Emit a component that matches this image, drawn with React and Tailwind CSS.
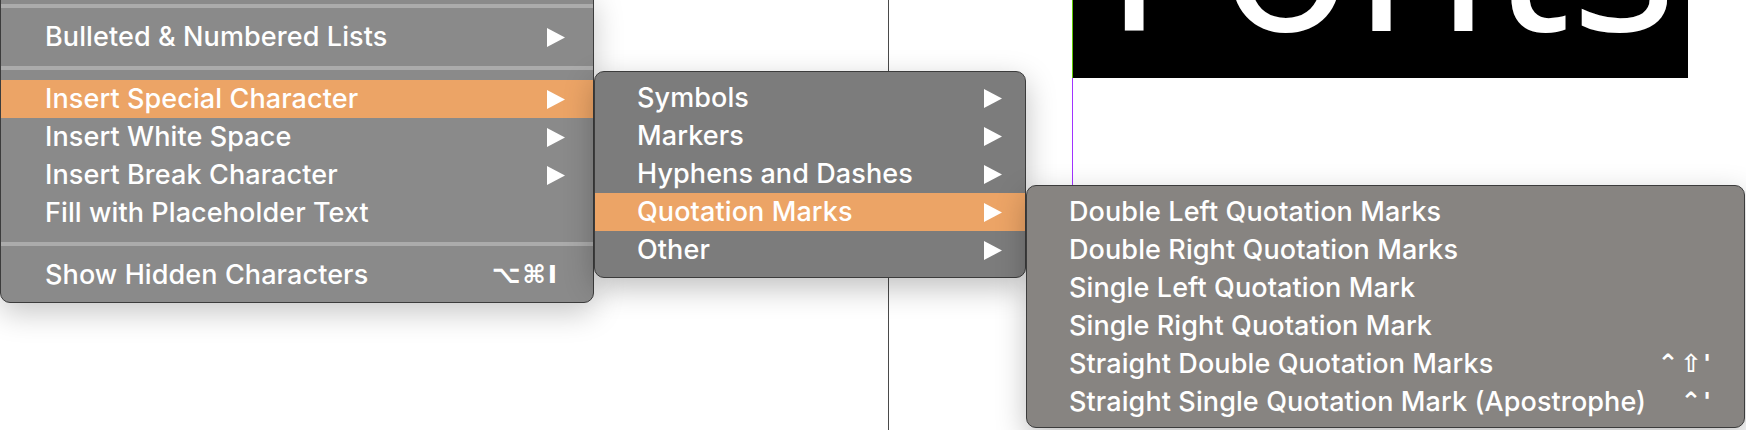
import React from 'react';

const Arrow = () => (
    <svg width="18" height="19" viewBox="0 0 18 19" className="shrink-0">
        <polygon points="0,0 18,9.5 0,19" fill="#ffffff" />
    </svg>
);

const Separator = () => (
    <div className="h-[24px] pt-[10px]">
        <div className="h-[4px] bg-[#ababab]" />
    </div>
);

const Row = ({ label, active, arrow, shortcut, pl, pr }) => (
    <div className={`flex h-[38px] items-center justify-between ${pl} ${pr} ${active ? 'bg-[#eca466]' : ''}`}>
        <span className="whitespace-nowrap">{label}</span>
        {arrow && <Arrow />}
        {shortcut && <span className="whitespace-nowrap font-['DejaVu_Sans',sans-serif] text-[25px] font-bold tracking-[2px]">{shortcut}</span>}
    </div>
);

const subItems = ["Symbols", "Markers", "Hyphens and Dashes", "Quotation Marks", "Other"];

const quoteItems = [
    { label: "Double Left Quotation Marks" },
    { label: "Double Right Quotation Marks" },
    { label: "Single Left Quotation Mark" },
    { label: "Single Right Quotation Mark" },
    { label: "Straight Double Quotation Marks", shortcut: "⌃⇧'" },
    { label: "Straight Single Quotation Mark (Apostrophe)", shortcut: "⌃'" },
];

export default function App() {
    return (
        <div className="relative h-[430px] w-[1746px] overflow-hidden bg-white font-['Inter','DejaVu_Sans',sans-serif] text-[27px] font-medium tracking-[0.1px] text-white">
            {/* canvas behind the menus */}
            <div className="absolute left-[888px] top-0 h-full w-px bg-[#4a4a4a]" />
            <div className="absolute left-[1072px] top-0 h-[78px] w-[616px] overflow-hidden bg-black">
                <div className="absolute left-[31px] top-[-167px] whitespace-nowrap font-['Open_Sans',sans-serif] text-[224px] font-normal leading-none tracking-normal text-white">Fonts</div>
            </div>
            <div className="absolute left-[1072px] top-0 h-[78px] w-px bg-[#5fcc00]" />
            <div className="absolute left-[1072px] top-[78px] h-[110px] w-px bg-[#a033ff]" />

            {/* main menu */}
            <div className="absolute left-0 top-[-7px] w-[594px] rounded-b-[10px] border border-[#3c3c3c] bg-[#8a8a8a] pb-[8px] shadow-[0_10px_30px_rgba(0,0,0,0.22)]">
                <Separator />
                <Row label="Bulleted & Numbered Lists" arrow pl="pl-[44px]" pr="pr-[28px]" />
                <Separator />
                <Row label="Insert Special Character" arrow active pl="pl-[44px]" pr="pr-[28px]" />
                <Row label="Insert White Space" arrow pl="pl-[44px]" pr="pr-[28px]" />
                <Row label="Insert Break Character" arrow pl="pl-[44px]" pr="pr-[28px]" />
                <Row label="Fill with Placeholder Text" pl="pl-[44px]" pr="pr-[28px]" />
                <Separator />
                <Row label="Show Hidden Characters" shortcut="⌥⌘I" pl="pl-[44px]" pr="pr-[34px]" />
            </div>

            {/* special character submenu */}
            <div className="absolute left-[594px] top-[71px] w-[432px] overflow-hidden rounded-[10px] border border-[#3c3c3c] bg-[#7c7c7c] pb-[8px] pt-[7px] shadow-[0_10px_30px_rgba(0,0,0,0.25)]">
                {subItems.map((item) => (
                    <Row key={item} label={item} arrow active={item === "Quotation Marks"} pl="pl-[42px]" pr="pr-[23px]" />
                ))}
            </div>

            {/* quotation marks submenu */}
            <div className="absolute left-[1026px] top-[185px] w-[719px] rounded-[10px] border border-[#3c3c3c] bg-[#878481] pb-[6px] pt-[7px] shadow-[0_10px_30px_rgba(0,0,0,0.25)]">
                {quoteItems.map((item) => (
                    <Row key={item.label} label={item.label} shortcut={item.shortcut} pl="pl-[42px]" pr="pr-[31px]" />
                ))}
            </div>
        </div>
    );
}
